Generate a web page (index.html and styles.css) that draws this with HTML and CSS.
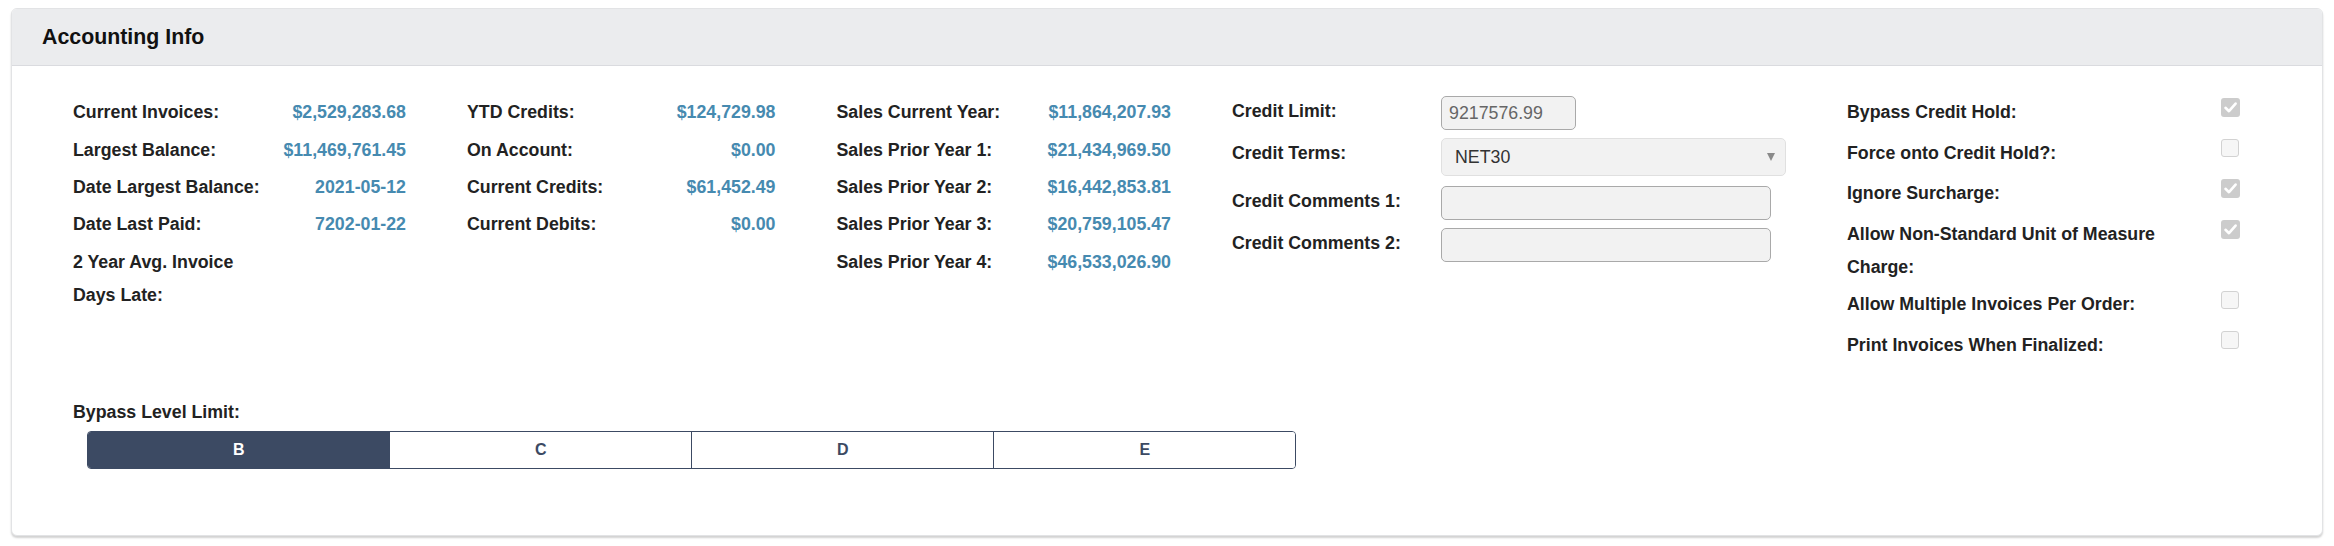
FILE: index.html
```html
<!DOCTYPE html>
<html>
<head>
<meta charset="utf-8">
<link rel="stylesheet" href="styles.css">
</head>
<body>
<div class="card">
  <div class="card-header"><h2 class="title">Accounting Info</h2></div>
  <div class="card-body">
    <div class="grid">
      <div class="col col1">
        <div class="row"><span class="lbl">Current Invoices:</span><span class="val">$2,529,283.68</span></div>
        <div class="row"><span class="lbl">Largest Balance:</span><span class="val">$11,469,761.45</span></div>
        <div class="row"><span class="lbl">Date Largest Balance:</span><span class="val">2021-05-12</span></div>
        <div class="row"><span class="lbl">Date Last Paid:</span><span class="val">7202-01-22</span></div>
        <div class="row"><span class="lbl">2 Year Avg. Invoice Days Late:</span><span class="val"></span></div>
      </div>
      <div class="col col2">
        <div class="row"><span class="lbl">YTD Credits:</span><span class="val">$124,729.98</span></div>
        <div class="row"><span class="lbl">On Account:</span><span class="val">$0.00</span></div>
        <div class="row"><span class="lbl">Current Credits:</span><span class="val">$61,452.49</span></div>
        <div class="row"><span class="lbl">Current Debits:</span><span class="val">$0.00</span></div>
      </div>
      <div class="col col3">
        <div class="row"><span class="lbl">Sales Current Year:</span><span class="val">$11,864,207.93</span></div>
        <div class="row"><span class="lbl">Sales Prior Year 1:</span><span class="val">$21,434,969.50</span></div>
        <div class="row"><span class="lbl">Sales Prior Year 2:</span><span class="val">$16,442,853.81</span></div>
        <div class="row"><span class="lbl">Sales Prior Year 3:</span><span class="val">$20,759,105.47</span></div>
        <div class="row"><span class="lbl">Sales Prior Year 4:</span><span class="val">$46,533,026.90</span></div>
      </div>
      <div class="col col4">
        <div class="frow"><span class="flbl">Credit Limit:</span><div class="input input-short">9217576.99</div></div>
        <div class="frow frow-sel"><span class="flbl">Credit Terms:</span><div class="select"><span>NET30</span><span class="caret"></span></div></div>
        <div class="frow"><span class="flbl">Credit Comments 1:</span><div class="input input-long"></div></div>
        <div class="frow"><span class="flbl">Credit Comments 2:</span><div class="input input-long"></div></div>
      </div>
      <div class="col col5">
        <div class="crow"><span class="clbl">Bypass Credit Hold:</span><span class="cb checked"><svg viewBox="0 0 19 19" width="19" height="19"><path d="M4.5 9.8 L8 13.2 L14.6 5.6" fill="none" stroke="#fff" stroke-width="2.6" stroke-linecap="round" stroke-linejoin="round"/></svg></span></div>
        <div class="crow"><span class="clbl">Force onto Credit Hold?:</span><span class="cb"></span></div>
        <div class="crow"><span class="clbl">Ignore Surcharge:</span><span class="cb checked"><svg viewBox="0 0 19 19" width="19" height="19"><path d="M4.5 9.8 L8 13.2 L14.6 5.6" fill="none" stroke="#fff" stroke-width="2.6" stroke-linecap="round" stroke-linejoin="round"/></svg></span></div>
        <div class="crow"><span class="clbl">Allow Non-Standard Unit of Measure Charge:</span><span class="cb checked"><svg viewBox="0 0 19 19" width="19" height="19"><path d="M4.5 9.8 L8 13.2 L14.6 5.6" fill="none" stroke="#fff" stroke-width="2.6" stroke-linecap="round" stroke-linejoin="round"/></svg></span></div>
        <div class="crow"><span class="clbl">Allow Multiple Invoices Per Order:</span><span class="cb"></span></div>
        <div class="crow"><span class="clbl">Print Invoices When Finalized:</span><span class="cb"></span></div>
      </div>
    </div>
    <div class="bypass">
      <div class="bypass-lbl">Bypass Level Limit:</div>
      <div class="seg">
        <div class="seg-item active">B</div>
        <div class="seg-item">C</div>
        <div class="seg-item">D</div>
        <div class="seg-item">E</div>
      </div>
    </div>
  </div>
</div>
</body>
</html>
```
FILE: styles.css
```css
html, body {
  margin: 0;
  padding: 0;
  background: #ffffff;
}
body {
  padding: 8px 11px;
  font-family: "Liberation Sans", Arial, sans-serif;
  color: #222222;
}
.card {
  border: 1px solid #e2e3e5;
  border-radius: 6px;
  background: #ffffff;
  box-shadow: 0 2px 2px rgba(0, 0, 0, 0.18);
  overflow: hidden;
}
.card-header {
  height: 56px;
  background: #ebecee;
  border-bottom: 1px solid #dadbdf;
  display: flex;
  align-items: center;
  padding-left: 30px;
}
.title {
  margin: 0;
  font-size: 21.33px;
  font-weight: bold;
  color: #111111;
}
.card-body {
  padding: 30.3px 60px 66px 61px;
}
.grid {
  display: grid;
  grid-template-columns: 333px 308.5px 334.5px 554px 1fr;
  column-gap: 61px;
  align-items: start;
}
.row {
  display: flex;
  align-items: flex-start;
  font-size: 17.78px;
  line-height: 33px;
  margin-bottom: 4.4px;
  font-weight: bold;
}
.lbl {
  color: #222222;
}
.col1 .lbl {
  width: 196px;
  flex: none;
}
.val {
  flex: 1;
  text-align: right;
  color: #468ab0;
}
.frow {
  display: flex;
  align-items: flex-start;
  margin-bottom: 8px;
}
.frow-sel {
  margin-bottom: 9.4px;
}
.flbl {
  width: 209px;
  flex: none;
  font-size: 17.78px;
  font-weight: bold;
  line-height: 30px;
}
.input {
  box-sizing: border-box;
  height: 34px;
  border: 1px solid #a9a9a9;
  border-radius: 5px;
  background: #f2f2f2;
  font-size: 17.78px;
  line-height: 32px;
  padding-left: 7px;
  color: #666666;
}
.input-short {
  width: 135px;
}
.input-long {
  width: 330px;
}
.select {
  box-sizing: border-box;
  width: 345px;
  height: 38px;
  border: 1px solid #e0e0e0;
  border-radius: 5px;
  background: #f2f2f2;
  display: flex;
  align-items: center;
  justify-content: space-between;
  padding: 0 10px 0 13px;
  font-size: 17.78px;
  color: #333333;
}
.caret {
  width: 0;
  height: 0;
  border-left: 4.5px solid transparent;
  border-right: 4.5px solid transparent;
  border-top: 8px solid #8a8a8a;
}
.crow {
  display: flex;
  align-items: flex-start;
  min-height: 36.2px;
  margin-bottom: 4.3px;
}
.clbl {
  width: 374px;
  flex: none;
  font-size: 17.78px;
  font-weight: bold;
  line-height: 33px;
}
.cb {
  box-sizing: border-box;
  width: 18px;
  height: 18px;
  margin-top: 2.5px;
  border: 1.5px solid #d2d2d2;
  border-radius: 3px;
  background: #f6f6f6;
  display: flex;
}
.cb.checked {
  width: 19px;
  height: 19px;
  margin-top: 2px;
  border: none;
  background: #cccccc;
}
.bypass {
  margin-top: 27.4px;
}
.bypass-lbl {
  font-size: 17.78px;
  font-weight: bold;
  line-height: 33px;
}
.seg {
  margin: 1.5px 0 0 14.3px;
  width: 1209px;
  height: 38px;
  box-sizing: border-box;
  border: 1px solid #3c4a63;
  border-radius: 4px;
  display: flex;
  overflow: hidden;
}
.seg-item {
  flex: 1;
  display: flex;
  align-items: center;
  justify-content: center;
  font-size: 16px;
  font-weight: bold;
  color: #3c4a63;
  background: #ffffff;
  border-left: 1px solid #3c4a63;
}
.seg-item:first-child {
  border-left: none;
}
.seg-item.active {
  background: #3c4a63;
  color: #ffffff;
}
```
